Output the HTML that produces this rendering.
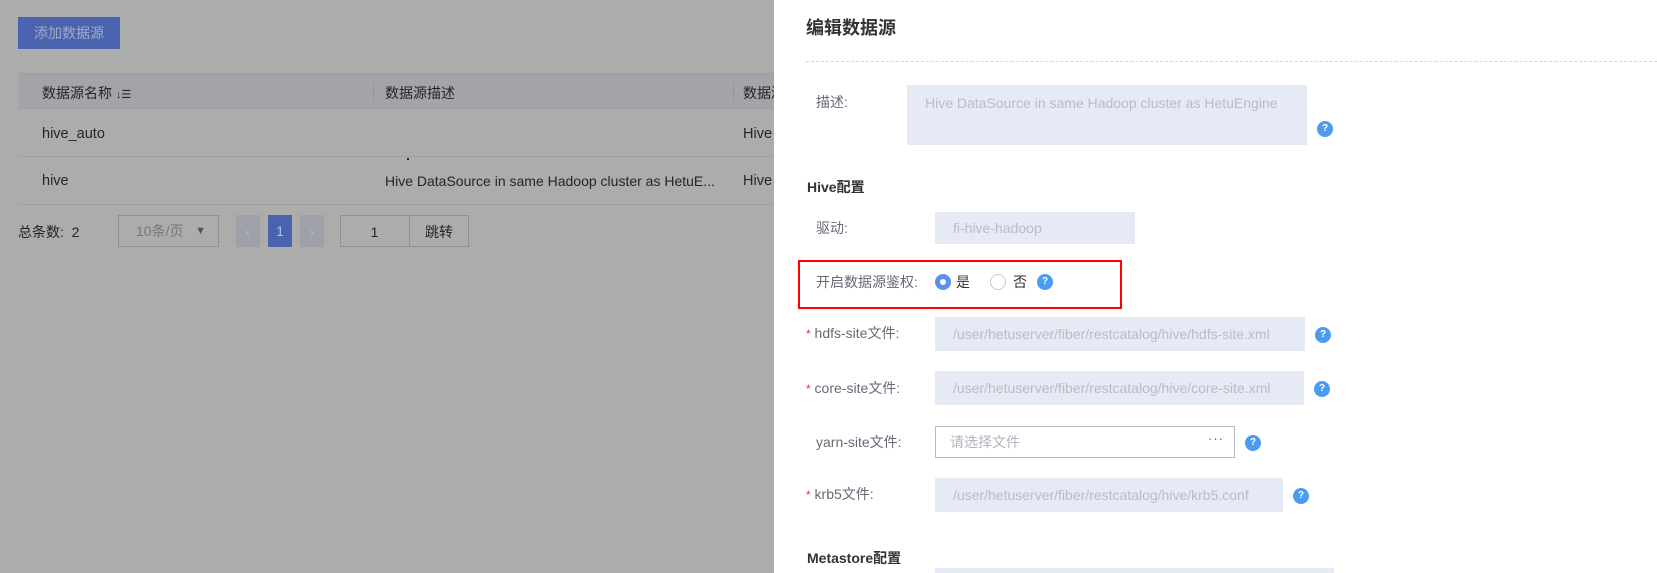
<!DOCTYPE html>
<html style="overflow:hidden;height:573px"><head><meta charset="utf-8"><style>
*{margin:0;padding:0;box-sizing:border-box}
body{width:1657px;height:573px;overflow:hidden;position:relative;background:#acacac;font-family:"Liberation Sans","Noto Sans CJK SC",sans-serif;font-size:14px;color:#252525}
.a{position:absolute;white-space:nowrap}
.lbl{color:#666a75;font-size:14px;line-height:20px}
.inp{position:absolute;background:#e6eaf4;color:#b8bcc6;font-size:14px;padding-left:18px;display:flex;align-items:center;white-space:nowrap;overflow:hidden}
.help{position:absolute;width:16px;height:16px;border-radius:50%;background:#4b9cf0;color:#fff;font-size:10px;font-weight:bold;text-align:center;line-height:16px}
.star{color:#e33;font-size:12px}
</style></head><body>
<div class="a" style="left:18px;top:17px;width:102px;height:32px;background:#4a63ae;color:#a3abc9;font-size:14px;line-height:32px;text-align:center">添加数据源</div>
<div class="a" style="left:18px;top:73px;width:760px;height:36px;background:#a3a4a9;border-top:1px solid #9ea0a8;border-bottom:1px solid #9ea0a8"></div>
<div class="a" style="left:42px;top:83px;font-size:14px;line-height:20px">数据源名称 <span style="font-size:11px">↓☰</span></div>
<div class="a" style="left:373px;top:83px;width:1px;height:18px;background:#94969c"></div>
<div class="a" style="left:385px;top:83px;line-height:20px">数据源描述</div>
<div class="a" style="left:733px;top:83px;width:1px;height:18px;background:#94969c"></div>
<div class="a" style="left:743px;top:83px;line-height:20px">数据源</div>
<div class="a" style="left:42px;top:124px;line-height:20px;font-size:14.5px">hive_auto</div>
<div class="a" style="left:743px;top:124px;line-height:20px;font-size:14.5px">Hive</div>
<div class="a" style="left:18px;top:156px;width:760px;height:1px;background:#9ea0a8"></div>
<div class="a" style="left:407px;top:158px;width:2px;height:2px;background:#222"></div>
<div class="a" style="left:42px;top:171px;line-height:20px;font-size:14.5px">hive</div>
<div class="a" style="left:385px;top:171px;line-height:20px;font-size:14px">Hive DataSource in same Hadoop cluster as HetuE...</div>
<div class="a" style="left:743px;top:171px;line-height:20px;font-size:14.5px">Hive</div>
<div class="a" style="left:18px;top:204px;width:760px;height:1px;background:#9ea0a8"></div>
<div class="a" style="left:18px;top:222px;line-height:20px;font-size:14px">总条数:&nbsp; 2</div>
<div class="a" style="left:118px;top:215px;width:101px;height:32px;border:1px solid #8e9098;color:#777;line-height:30px;padding-left:17px">10条/页<span style="position:absolute;right:12px;top:0;font-size:11px;color:#555">▼</span></div>
<div class="a" style="left:236px;top:215px;width:24px;height:32px;background:#9fa1a8;color:#b5b7bc;text-align:center;line-height:32px">&lsaquo;</div>
<div class="a" style="left:268px;top:215px;width:24px;height:32px;background:#4a63ae;color:#b8c0dc;text-align:center;line-height:32px">1</div>
<div class="a" style="left:300px;top:215px;width:24px;height:32px;background:#9fa1a8;color:#b5b7bc;text-align:center;line-height:32px">&rsaquo;</div>
<div class="a" style="left:340px;top:215px;width:129px;height:32px;border:1px solid #8e9098"></div>
<div class="a" style="left:409px;top:215px;width:1px;height:32px;background:#8e9098"></div>
<div class="a" style="left:340px;top:222px;width:69px;text-align:center;line-height:20px">1</div>
<div class="a" style="left:409px;top:222px;width:60px;text-align:center;line-height:20px">跳转</div>

<div class="a" style="left:774px;top:0;width:883px;height:573px;background:#fff"></div>
<div class="a" style="left:806px;top:16px;font-size:18px;font-weight:bold;color:#333;line-height:24px">编辑数据源</div>
<div class="a" style="left:806px;top:61px;width:851px;border-top:1px dashed #d5d7dc"></div>

<div class="a lbl" style="left:816px;top:92px">描述:</div>
<div class="inp" style="left:907px;top:85px;width:400px;height:60px;align-items:flex-start;padding-top:10px">Hive DataSource in same Hadoop cluster as HetuEngine</div>
<div class="help" style="left:1317px;top:121px">?</div>

<div class="a" style="left:807px;top:177px;font-size:14px;font-weight:bold;color:#333;line-height:20px">Hive配置</div>
<div class="a lbl" style="left:816px;top:218px">驱动:</div>
<div class="inp" style="left:935px;top:212px;width:200px;height:32px">fi-hive-hadoop</div>

<div class="a" style="left:798px;top:260px;width:324px;height:49px;border:2px solid #f00"></div>
<div class="a lbl" style="left:816px;top:272px">开启数据源鉴权:</div>
<div class="a" style="left:935px;top:274px;width:16px;height:16px;border-radius:50%;background:#5b8ff0"></div>
<div class="a" style="left:940px;top:279px;width:6px;height:6px;border-radius:50%;background:#fff"></div>
<div class="a" style="left:956px;top:272px;line-height:20px;color:#333">是</div>
<div class="a" style="left:990px;top:274px;width:16px;height:16px;border-radius:50%;border:1px solid #c5c9d2"></div>
<div class="a" style="left:1013px;top:272px;line-height:20px;color:#333">否</div>
<div class="help" style="left:1037px;top:274px">?</div>

<div class="a lbl" style="left:806px;top:323px"><span class="star">*</span> hdfs-site文件:</div>
<div class="inp" style="left:935px;top:317px;width:370px;height:34px">/user/hetuserver/fiber/restcatalog/hive/hdfs-site.xml</div>
<div class="help" style="left:1315px;top:327px">?</div>

<div class="a lbl" style="left:806px;top:378px"><span class="star">*</span> core-site文件:</div>
<div class="inp" style="left:935px;top:371px;width:369px;height:34px">/user/hetuserver/fiber/restcatalog/hive/core-site.xml</div>
<div class="help" style="left:1314px;top:381px">?</div>

<div class="a lbl" style="left:816px;top:432px">yarn-site文件:</div>
<div class="inp" style="left:935px;top:426px;width:300px;height:32px;background:#fff;border:1px solid #b6bac4;color:#b0b4be;padding-left:14px">请选择文件<span style="position:absolute;right:10px;top:4px;color:#666;font-size:13px;letter-spacing:1px">···</span></div>
<div class="help" style="left:1245px;top:435px">?</div>

<div class="a lbl" style="left:806px;top:484px"><span class="star">*</span> krb5文件:</div>
<div class="inp" style="left:935px;top:478px;width:348px;height:34px">/user/hetuserver/fiber/restcatalog/hive/krb5.conf</div>
<div class="help" style="left:1293px;top:488px">?</div>

<div class="a" style="left:807px;top:548px;font-size:14px;font-weight:bold;color:#333;line-height:20px">Metastore配置</div>
<div class="a" style="left:935px;top:568px;width:399px;height:5px;background:#e6eaf4"></div>
</body></html>
